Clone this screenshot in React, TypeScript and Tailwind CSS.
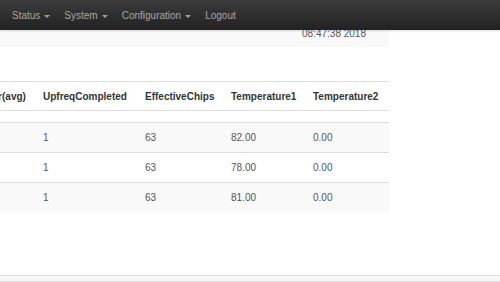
import React from "react";

const navItems = [
  { label: "Status", caret: true },
  { label: "System", caret: true },
  { label: "Configuration", caret: true },
  { label: "Logout", caret: false },
];

const headers = ["Power(avg)", "UpfreqCompleted", "EffectiveChips", "Temperature1", "Temperature2"];

const rows = [
  ["", "1", "63", "82.00", "0.00"],
  ["", "1", "63", "78.00", "0.00"],
  ["", "1", "63", "81.00", "0.00"],
];

const cols = "grid grid-cols-[74px_102px_86px_82px_84px]";

const Caret = () => (
  <span className="ml-[4px] inline-block w-0 h-0 border-l-[3px] border-r-[3px] border-t-[3px] border-l-transparent border-r-transparent border-t-[#9d9d9d] translate-y-[1px]" />
);

export default function App() {
  return (
    <div className="w-[500px] h-[282px] overflow-hidden bg-white flex flex-col font-['Liberation_Sans',Arial,sans-serif]">
      {/* navbar */}
      <div className="h-[30px] shrink-0 bg-linear-to-b from-[#3c3c3c] to-[#222] flex items-center pl-[12px] text-[10px] text-[#a8a8a8] relative z-10 shadow-[0_1px_2px_rgba(0,0,0,0.15)]">
        {navItems.map((n) => (
          <div key={n.label} className="flex items-center mr-[14px]">
            <span>{n.label}</span>
            {n.caret && <Caret />}
          </div>
        ))}
      </div>

      <div className="w-[389px] overflow-hidden">
        {/* status panel */}
        <div className="h-[17px] bg-[#f9f9f9] flex justify-end pr-[23px]">
          <span className="text-[10px] leading-[10px] text-[#555] -mt-[1px]">08:47:38 2018</span>
        </div>

        {/* table */}
        <div className="mt-[34px] ml-[-39px] w-[428px] text-[10px]">
          <div className={`${cols} border-t border-b border-[#ddd] h-[30px] items-center font-bold text-[#333]`}>
            {headers.map((h, j) => (
              <div key={h} className={`whitespace-nowrap ${j === 0 ? "pl-[11px] pr-[8px]" : "px-[8px]"}`}>{h}</div>
            ))}
          </div>
          <div className="h-[11px]" />
          {rows.map((r, i) => (
            <div
              key={i}
              className={`${cols} border-t border-[#ddd] h-[30px] items-center text-[#555] ${i % 2 === 0 ? "bg-[#f9f9f9]" : "bg-white"}`}
            >
              {r.map((c, j) => (
                <div key={j} className="px-[8px] whitespace-nowrap">{c}</div>
              ))}
            </div>
          ))}
        </div>
      </div>

      {/* footer strip */}
      <div className="mt-auto h-[7px] border-t border-b border-[#ddd] bg-[#f7f7f7]" />
    </div>
  );
}
